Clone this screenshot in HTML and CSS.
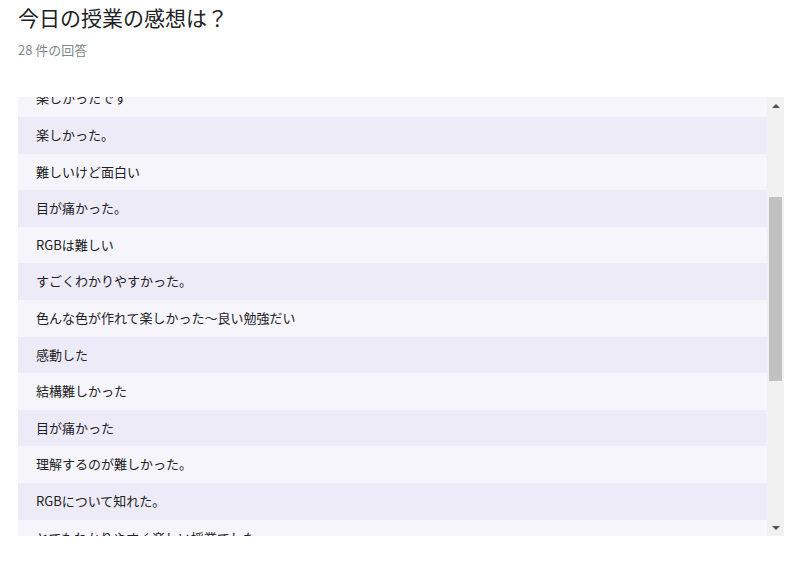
FILE: index.html
```html
<!DOCTYPE html>
<html lang="ja">
<head>
    <meta charset="UTF-8">
    <meta name="viewport" content="width=device-width, initial-scale=1.0">
    <title>今日の授業の感想は？</title>
    <link rel="stylesheet" href="styles.css">
</head>
<body>
    <div class="question">
        <h1>今日の授業の感想は？</h1>
        <p class="count">28 件の回答</p>
    </div>

    <!-- Response list with scrollbar -->
    <div class="answers">
        <div class="answers-view">
            <ul class="answer-list">
                <li>楽しかったです</li>
                <li>楽しかった。</li>
                <li>難しいけど面白い</li>
                <li>目が痛かった。</li>
                <li>RGBは難しい</li>
                <li>すごくわかりやすかった。</li>
                <li>色んな色が作れて楽しかった〜良い勉強だい</li>
                <li>感動した</li>
                <li>結構難しかった</li>
                <li>目が痛かった</li>
                <li>理解するのが難しかった。</li>
                <li>RGBについて知れた。</li>
                <li>とてもわかりやすく楽しい授業でした</li>
            </ul>
        </div>
        <div class="scrollbar">
            <span class="arrow up"></span>
            <div class="track">
                <div class="thumb"></div>
            </div>
            <span class="arrow down"></span>
        </div>
    </div>
</body>
</html>
```

FILE: styles.css
```css
body {
    margin: 0;
    padding: 0 20px 0 18px;
    font-family: "Noto Sans CJK JP", "Noto Sans", sans-serif;
    color: #202124;
    background-color: #fff;
}

.question {
    padding-top: 2px;
    height: 95px;
}
.question h1 {
    margin: 0;
    font-size: 21px;
    font-weight: 400;
    line-height: 30px;
}
.count {
    margin: 10px 0 0;
    font-size: 13px;
    line-height: 16px;
    color: #80868b;
}

/* Answer box */
.answers {
    display: flex;
    width: 766px;
    height: 439px;
}
.answers-view {
    flex: 1;
    overflow: hidden;
}
.answer-list {
    list-style: none;
    margin: -16.6px 0 0;
    padding: 0;
}
.answer-list li {
    height: 36.6px;
    line-height: 36.6px;
    padding-left: 18px;
    font-size: 13px;
    background-color: #f7f5fc;
    white-space: nowrap;
}
.answer-list li:nth-child(even) {
    background-color: #eeebf8;
}

/* Fake scrollbar */
.scrollbar {
    width: 17px;
    display: flex;
    flex-direction: column;
    align-items: center;
    background-color: #f1f1f1;
}
.arrow {
    height: 17px;
    width: 17px;
    display: flex;
    justify-content: center;
    align-items: center;
}
.arrow::before {
    content: "";
    border-left: 4px solid transparent;
    border-right: 4px solid transparent;
}
.arrow.up::before {
    border-bottom: 4px solid #505050;
}
.arrow.down::before {
    border-top: 4px solid #505050;
}
.track {
    flex: 1;
    width: 100%;
}
.thumb {
    margin: 83px auto 0;
    width: 13px;
    height: 184px;
    background-color: #c1c1c1;
}
```
